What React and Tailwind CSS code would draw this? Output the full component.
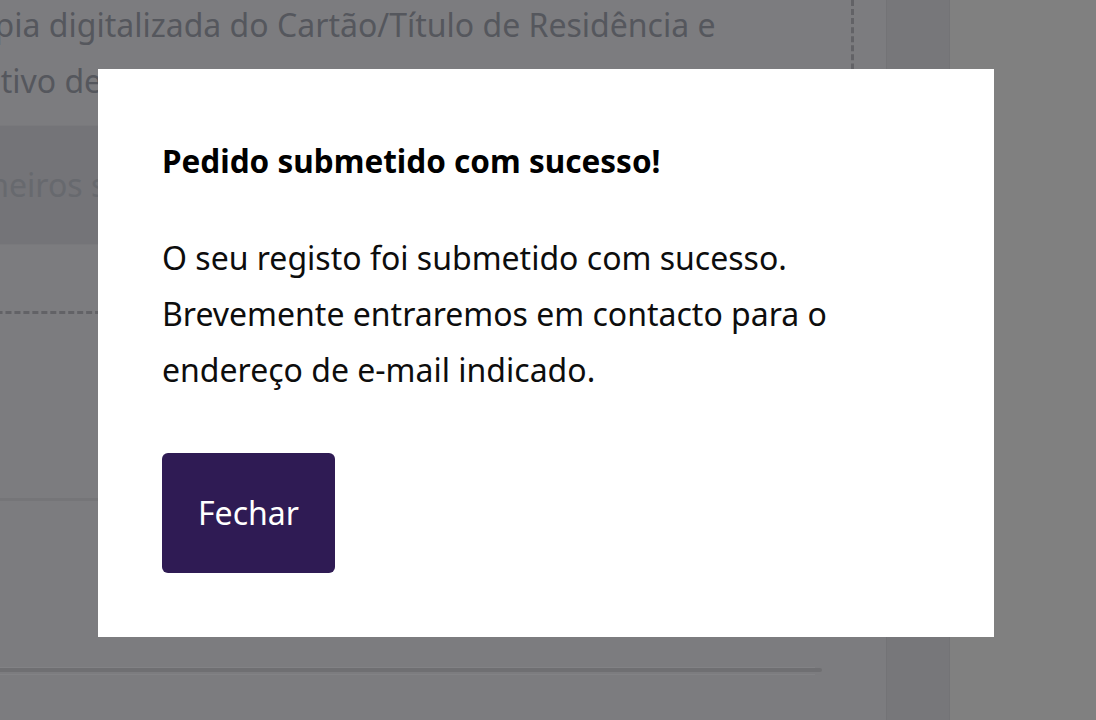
export default function App() {
  return (
    <div className="relative flex h-[720px] w-[1096px] overflow-hidden font-['Noto_Sans',sans-serif]">
      {/* main column (background page, dimmed) */}
      <div className="flex w-[886px] flex-col bg-[#7c7c7f]">
        <div className="ml-[-120px] w-[974px] border-b-[3px] border-r-[3px] border-dashed border-[#626266] pb-[66px] pl-[20px]">
          <div className="mt-[-3px] text-[32px] leading-[56px] text-[#55575d] whitespace-nowrap">
            <div className="pl-[55px]">Cópia digitalizada do Cartão/Título de Residência e</div>
            <div className="ml-[-54px]">Comprovativo de</div>
          </div>
          <div className="mt-[16px] flex h-[120px] w-[900px] items-center border-y border-[#79797c] bg-[#747478] pl-[49px] text-[32px] leading-[56px] text-[#67696e] whitespace-nowrap">
            Ficheiros selecionados
          </div>
        </div>
        <div className="mt-[184px] h-[3px] w-[800px] bg-[#757578]" />
        <div className="mt-[166px] flex w-[822px] flex-col">
          <div className="h-px w-[815px] bg-[#828285]" />
          <div className="h-[4px] rounded-r-full bg-[#6f6f72]" />
          <div className="mt-[2px] h-px w-[815px] bg-[#828285]" />
        </div>
      </div>
      <div className="w-[64px] border-x border-[#737376] bg-[#77777a]" />
      <div className="flex-1 bg-[#808080]" />

      {/* modal */}
      <div className="absolute left-[98px] top-[69px] flex w-[896px] flex-col items-start bg-white pb-[64px] pl-[64px] pt-[64px]">
        <h2 className="text-[31.5px] font-bold leading-[56px] text-black">Pedido submetido com sucesso!</h2>
        <p className="mt-[41px] text-[32px] leading-[56px] text-[#0d0d0d]">
          O seu registo foi submetido com sucesso.
          <br />
          Brevemente entraremos em contacto para o
          <br />
          endereço de e-mail indicado.
        </p>
        <button className="mt-[55px] flex h-[120px] w-[173px] items-center justify-center rounded-[6px] bg-[#2f1b54] text-[32px] text-white">
          Fechar
        </button>
      </div>
    </div>
  );
}
